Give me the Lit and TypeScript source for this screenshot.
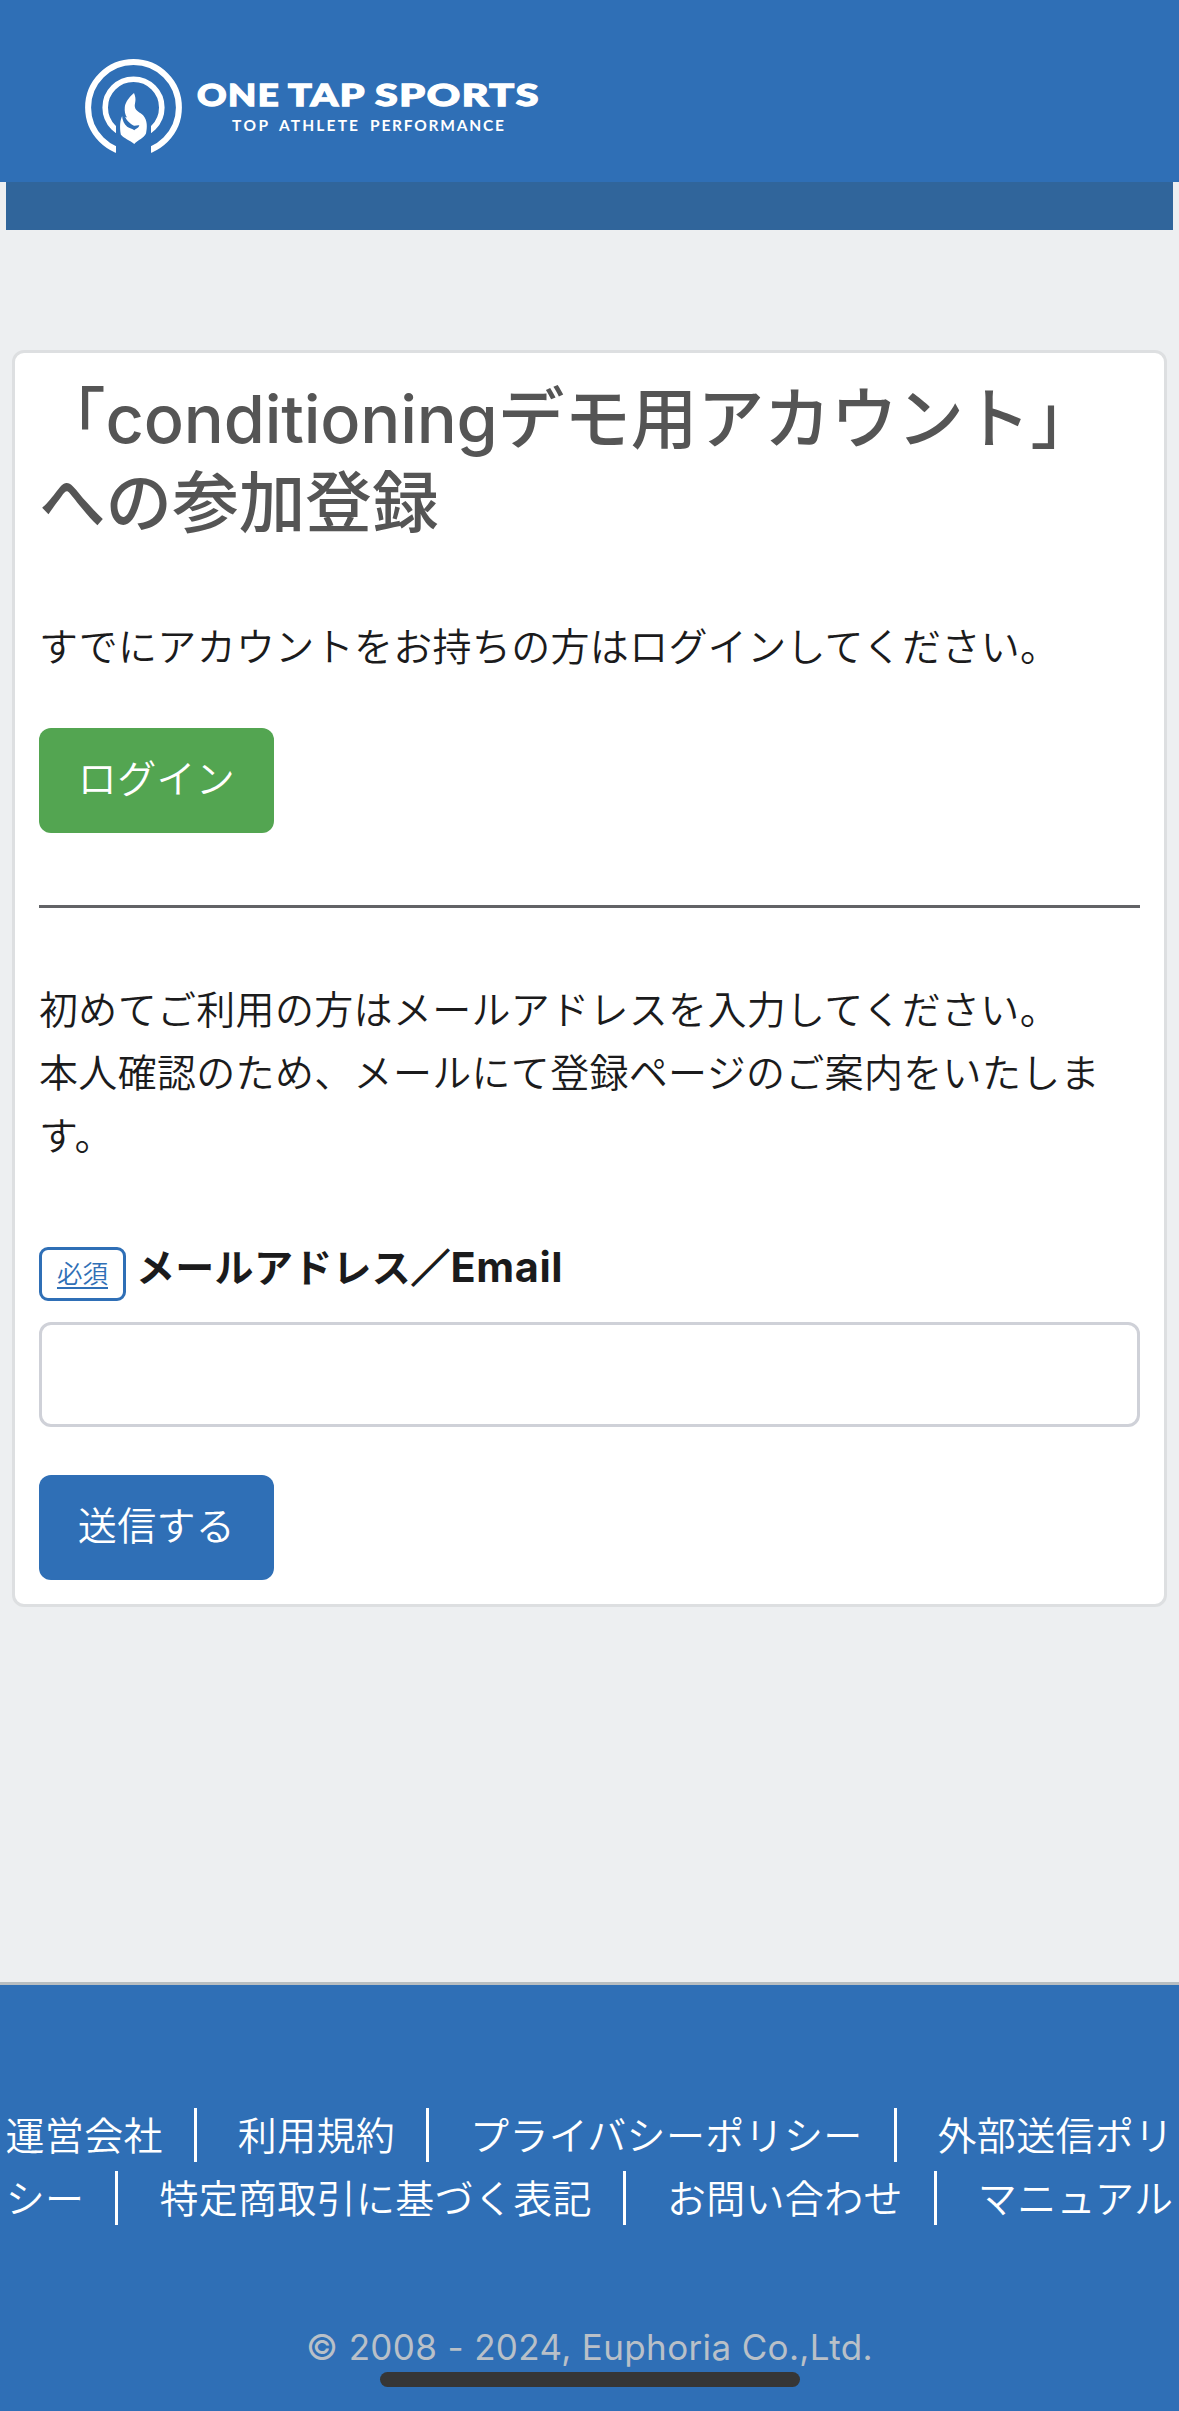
import { LitElement, html, css, svg } from "lit";
import { customElement } from "lit/decorators.js";

const FOOTER_LINKS = [
  "運営会社",
  "利用規約",
  "プライバシーポリシー",
  "外部送信ポリシー",
  "特定商取引に基づく表記",
  "お問い合わせ",
  "マニュアル",
];

const logoMark = svg`
  <defs>
    <clipPath id="ring-gap">
      <path d="M0 0H110V110H67V48H32V110H0Z" />
    </clipPath>
  </defs>
  <g clip-path="url(#ring-gap)" fill="none" stroke="#fff">
    <circle cx="49.5" cy="49.5" r="45.4" stroke-width="6" />
    <circle cx="49.5" cy="49.5" r="28.3" stroke-width="5.6" />
  </g>
  <path fill="#fff" d="M50 35C45.500 38.500 41.500 44 40.800 49C40.400 53 41 56.500 43 59.500L38.300 57.700C36 62 35.500 69 36.800 76.500C40 80.500 46 82.500 50.300 86C54 82 60 80 62 75.500C63.300 69 63.500 62.500 59.300 57.500C56 54 51.500 53.500 50.800 48.500C50.500 45 53 42 50 35Z" />
  <path fill="#2f6fb6" d="M40 55.500C41.500 62 46 65.500 49.500 67.500C51 68.300 53.500 66.800 55.300 67.300C55 69.800 52.300 70.300 50.300 72.300C48.500 70.600 45.500 70.600 43.200 68.800C40 66 38.500 62.500 38 57.500Z" />`;

@customElement("app-root")
export class AppRoot extends LitElement {
  static styles = css`
    :host {
      display: flex;
      flex-direction: column;
      position: relative;
      box-sizing: border-box;
      width: 1179px;
      height: 2411px;
      overflow: hidden;
      background: #edeff1;
      color: #1b1b1c;
      font: 350 39px/63px Inter, "Noto Sans CJK JP", sans-serif;
      letter-spacing: 0.32px;
      text-spacing-trim: space-all;
    }
    * { box-sizing: border-box; }
    .header {
      flex: none;
      height: 182px;
      padding: 58px 0 0 84px;
      background: #2f6fb6;
    }
    .logo { display: block; overflow: visible; letter-spacing: 0; }
    .wordmark {
      font: 900 31px Lato, sans-serif;
      letter-spacing: 1.2px;
      fill: #fff;
      stroke: #fff;
      stroke-width: 1.3px;
    }
    .tagline { font: 700 15.500px Lato, sans-serif; fill: #fff; }
    .navbar { flex: none; height: 48px; margin: 0 6px; background: #30659b; }
    .card {
      flex: none;
      height: 1257px;
      margin: 120px 12px 0;
      padding: 24px;
      border: 3px solid #dddfe1;
      border-radius: 12px;
      background: #fff;
    }
    .title {
      margin: 0;
      height: 168px;
      color: #555;
      font-size: 66.600px;
      font-weight: 500;
      line-height: 84px;
      letter-spacing: 0;
      white-space: nowrap;
    }
    .latin { letter-spacing: -0.2px; }
    .text { margin: 0; }
    .lead { margin-top: 70px; }
    .button {
      display: flex;
      align-items: center;
      justify-content: center;
      width: 235px;
      height: 105px;
      padding: 0 0 4px;
      border: 0;
      border-radius: 12px;
      background: #2f6fb6;
      color: #fff;
      font: inherit;
      letter-spacing: inherit;
    }
    .login { margin-top: 50px; background: #53a551; }
    .rule { height: 3px; margin: 72px 0 70px; border: 0; background: #626366; }
    .field {
      display: flex;
      align-items: flex-start;
      gap: 10px;
      height: 84px;
      margin-top: 71px;
    }
    .badge {
      display: flex;
      align-items: center;
      justify-content: center;
      width: 87px;
      height: 54px;
      margin-top: 9px;
      border: 3px solid #2f6fb6;
      border-radius: 9px;
      color: #2f6fb6;
      font-size: 25.500px;
      line-height: 36px;
      letter-spacing: 0;
      text-decoration: underline;
      text-decoration-thickness: 2px;
      text-underline-offset: 4px;
    }
    .label {
      margin-top: -4px;
      font-family: "Noto Sans CJK JP", sans-serif;
      font-weight: 700;
      letter-spacing: 0.3px;
    }
    .slash { -webkit-text-stroke: 1.5px currentColor; }
    .label-latin { font-family: Inter, sans-serif; font-size: 41.500px; line-height: 1; letter-spacing: 0.6px; }
    .input {
      display: block;
      width: 100%;
      height: 105px;
      padding: 0 30px;
      border: 3px solid #cfd1d8;
      border-radius: 12px;
      background: #fff;
      font: inherit;
    }
    .submit { margin-top: 48px; }
    .footer {
      flex: none;
      height: 429px;
      margin-top: 375px;
      padding: 119px 0 0;
      border-top: 3px solid #b7bdc1;
      background: #2f6fb6;
      text-align: center;
    }
    .links { margin: 0; color: #fff; }
    .divider {
      display: inline-block;
      width: 3px;
      height: 54px;
      margin: 0 41px 0 31px;
      background: #fff;
      vertical-align: -12px;
    }
    .copyright {
      margin: 90px 0 0;
      color: #b9c0c8;
      font-size: 35px;
      font-weight: 400;
      line-height: 54px;
      letter-spacing: 0.36px;
    }
    .home-indicator {
      position: absolute;
      left: 380px;
      top: 2372px;
      width: 420px;
      height: 15px;
      border-radius: 8px;
      background: #363636;
    }
  `;

  render() {
    return html`
      <header class="header">
        <svg class="logo" width="460" height="100" viewBox="0 0 460 100" role="img" aria-label="ONE TAP SPORTS">
          ${logoMark}
          <g class="wordmark">
            <text x="113" y="47.500" textLength="83" lengthAdjust="spacingAndGlyphs">ONE</text>
            <text x="204" y="47.500" textLength="78" lengthAdjust="spacingAndGlyphs">TAP</text>
            <text x="291" y="47.500" textLength="165" lengthAdjust="spacingAndGlyphs">SPORTS</text>
          </g>
          <g class="tagline">
            <text x="148" y="73" textLength="36">TOP</text>
            <text x="195" y="73" textLength="79">ATHLETE</text>
            <text x="286" y="73" textLength="134">PERFORMANCE</text>
          </g>
        </svg>
      </header>
      <div class="navbar"></div>
      <main class="card">
        <h1 class="title">「<span class="latin">conditioning</span>デモ用アカウント」<br />への参加登録</h1>
        <p class="text lead">すでにアカウントをお持ちの方はログインしてください。</p>
        <button class="button login">ログイン</button>
        <hr class="rule" />
        <p class="text">初めてご利用の方はメールアドレスを入力してください。<br />本人確認のため、メールにて登録ページのご案内をいたします。</p>
        <div class="field">
          <span class="badge">必須</span>
          <label class="label" for="email">メールアドレス<span class="slash">／</span><span class="label-latin">Email</span></label>
        </div>
        <input class="input" id="email" type="email" />
        <button class="button submit">送信する</button>
      </main>
      <footer class="footer">
        <p class="links">${FOOTER_LINKS.map(
          (name, i) => html`${i ? html`<span class="divider"></span>` : ""}<span>${name}</span>`
        )}</p>
        <p class="copyright">© 2008 - 2024, Euphoria Co.,Ltd.</p>
      </footer>
      <div class="home-indicator"></div>
    `;
  }
}
